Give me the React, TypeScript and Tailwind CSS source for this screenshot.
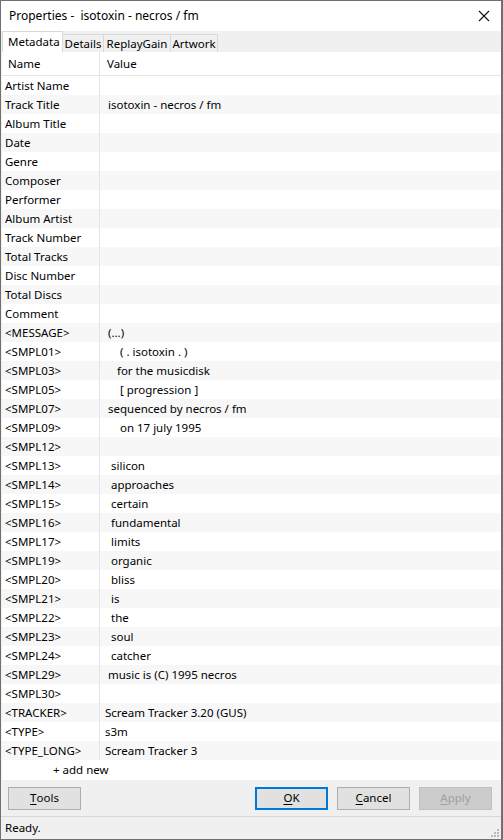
const fields: [string, string][] = [
  ['Artist Name', ''],
  ['Track Title', ' isotoxin - necros / fm'],
  ['Album Title', ''],
  ['Date', ''],
  ['Genre', ''],
  ['Composer', ''],
  ['Performer', ''],
  ['Album Artist', ''],
  ['Track Number', ''],
  ['Total Tracks', ''],
  ['Disc Number', ''],
  ['Total Discs', ''],
  ['Comment', ''],
  ['<MESSAGE>', ' (...)'],
  ['<SMPL01>', '     ( . isotoxin . )'],
  ['<SMPL03>', '    for the musicdisk'],
  ['<SMPL05>', '     [ progression ]'],
  ['<SMPL07>', ' sequenced by necros / fm'],
  ['<SMPL09>', '     on 17 july 1995'],
  ['<SMPL12>', ''],
  ['<SMPL13>', '  silicon'],
  ['<SMPL14>', '  approaches'],
  ['<SMPL15>', '  certain'],
  ['<SMPL16>', '  fundamental'],
  ['<SMPL17>', '  limits'],
  ['<SMPL19>', '  organic'],
  ['<SMPL20>', '  bliss'],
  ['<SMPL21>', '  is'],
  ['<SMPL22>', '  the'],
  ['<SMPL23>', '  soul'],
  ['<SMPL24>', '  catcher'],
  ['<SMPL29>', ' music is (C) 1995 necros'],
  ['<SMPL30>', ''],
  ['<TRACKER>', 'Scream Tracker 3.20 (GUS)'],
  ['<TYPE>', 's3m'],
  ['<TYPE_LONG>', 'Scream Tracker 3'],
];

const tabs = [
  { label: 'Details', w: 'w-[41px]' },
  { label: 'ReplayGain', w: 'w-[67px]' },
  { label: 'Artwork', w: 'w-[47px]' },
];

function Btn({ hot, rest, variant }: { hot: string; rest: string; variant?: 'default' | 'disabled' }) {
  const base = 'h-[23px] w-[73px] flex items-center justify-center';
  const look =
    variant === 'default'
      ? 'border-2 border-[#0078d7] bg-[#e1e1e1] text-black'
      : variant === 'disabled'
        ? 'border border-[#bfbfbf] bg-[#cccccc] text-[#a0a0a0]'
        : 'border border-[#adadad] bg-[#e1e1e1] text-black';
  return (
    <div className={`${base} ${look}`}>
      <span className="underline underline-offset-2">{hot}</span>
      <span>{rest}</span>
    </div>
  );
}

export default function App() {
  return (
    <div className="w-[503px] h-[840px] flex flex-col bg-[#f0f0f0] border-t border-l border-b border-r-2 border-[#707070] font-['Segoe_UI','Noto_Sans',sans-serif] text-[11.5px] text-black leading-none">
      {/* title bar */}
      <div className="h-[30px] bg-white flex items-center justify-between pl-2 pr-[9px] shrink-0">
        <span className="whitespace-pre text-[12px]">Properties -  isotoxin - necros / fm</span>
        <svg width="12" height="12" viewBox="0 0 12 12" className="mr-[2px]">
          <path d="M1 1 L11 11 M11 1 L1 11" stroke="#111" strokeWidth="1.1" />
        </svg>
      </div>

      {/* tab strip */}
      <div className="h-[21px] flex items-end pl-[1px] shrink-0">
        <div className="h-[21px] w-[61px] bg-white border-t border-l border-r border-[#d9d9d9] flex items-center pl-[5px]">
          Metadata
        </div>
        {tabs.map((t) => (
          <div
            key={t.label}
            className={`h-[18px] ${t.w} border-t border-r border-[#d9d9d9] bg-[#f0f0f0] flex items-center justify-center`}
          >
            {t.label}
          </div>
        ))}
      </div>

      {/* property list */}
      <div className="flex-1 bg-white ml-[1px] flex flex-col">
        <div className="h-[24px] flex border-b border-[#e5e5e5] shrink-0">
          <div className="w-[98px] pl-[6px] flex items-center border-r border-[#e5e5e5]">Name</div>
          <div className="pl-[7px] flex items-center">Value</div>
        </div>
        {fields.map(([name, value], i) => (
          <div key={name} className={`h-[19px] flex ${i % 2 ? 'bg-[#f7f7f7]' : 'bg-white'}`}>
            <div className="w-[98px] pl-[3px] flex items-center border-r border-[#e5e5e5]">{name}</div>
            <div className="pl-[5px] flex items-center whitespace-pre">{value}</div>
          </div>
        ))}
        <div className="h-[20px] flex items-center pl-[51px]">+ add new</div>
      </div>

      {/* dialog buttons */}
      <div className="h-[36px] flex items-center px-[7px] shrink-0">
        <Btn hot="T" rest="ools" />
        <div className="flex-1" />
        <div className="flex gap-[9px] mr-[2px]">
          <Btn hot="O" rest="K" variant="default" />
          <Btn hot="C" rest="ancel" />
          <Btn hot="A" rest="pply" variant="disabled" />
        </div>
      </div>

      {/* status bar */}
      <div className="h-[23px] border-t border-[#d7d7d7] flex items-center justify-between pl-[4px] shrink-0">
        <span>Ready.</span>
        <svg width="10" height="10" viewBox="0 0 10 10" className="self-end mb-[1px] mr-[1px]">
          {[
            [7, 1],
            [4, 4],
            [7, 4],
            [1, 7],
            [4, 7],
            [7, 7],
          ].map(([x, y]) => (
            <rect key={`${x}-${y}`} x={x} y={y} width="2" height="2" fill="#b8b8b8" />
          ))}
        </svg>
      </div>
    </div>
  );
}
